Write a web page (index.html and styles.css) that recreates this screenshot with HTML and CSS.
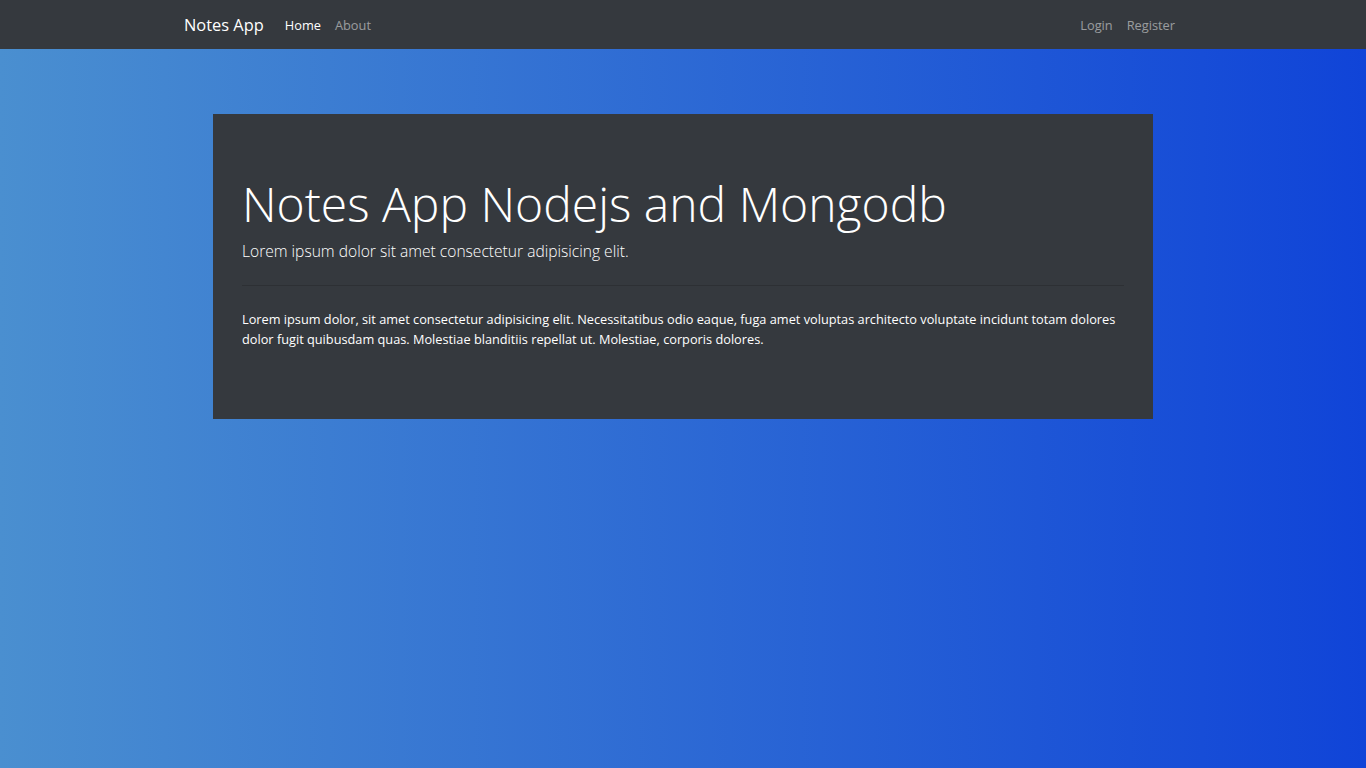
FILE: index.html
```html
<!DOCTYPE html>
<html lang="en">
<head>
<meta charset="utf-8">
<title>Notes App</title>
<link rel="stylesheet" href="styles.css">
</head>
<body>
<nav class="navbar">
  <div class="nav-container">
    <a class="brand" href="#">Notes App</a>
    <ul class="nav">
      <li><a class="nav-link active" href="#">Home</a></li>
      <li><a class="nav-link" href="#">About</a></li>
    </ul>
    <ul class="nav nav-right">
      <li><a class="nav-link" href="#">Login</a></li>
      <li><a class="nav-link" href="#">Register</a></li>
    </ul>
  </div>
</nav>
<main class="main">
  <section class="jumbotron">
    <h1 class="display">Notes App Nodejs and Mongodb</h1>
    <p class="lead">Lorem ipsum dolor sit amet consectetur adipisicing elit.</p>
    <hr class="divider">
    <p class="body-text">Lorem ipsum dolor, sit amet consectetur adipisicing elit. Necessitatibus odio eaque, fuga amet voluptas architecto voluptate incidunt totam dolores dolor fugit quibusdam quas. Molestiae blanditiis repellat ut. Molestiae, corporis dolores.</p>
  </section>
</main>
</body>
</html>
```
FILE: styles.css
```css
* { box-sizing: border-box; }
html, body { margin: 0; padding: 0; }
body {
  min-height: 100vh;
  font-family: "Open Sans", "Noto Sans", sans-serif;
  color: #fff;
  background: linear-gradient(to right, #4a8fd0 0%, #1044d8 100%);
}
.navbar {
  background: #35393e;
  height: 49px;
}
.nav-container {
  max-width: 1028px;
  margin: 0 auto;
  padding: 0 15px;
  height: 100%;
  display: flex;
  align-items: center;
}
.brand {
  color: #fff;
  text-decoration: none;
  font-size: 16.4px;
  margin-right: 14px;
}
.nav {
  list-style: none;
  margin: 0;
  padding: 0;
  display: flex;
}
.nav-right { margin-left: auto; }
.nav-link {
  display: block;
  padding: 8px 7px;
  font-size: 12.8px;
  color: rgba(255,255,255,.5);
  text-decoration: none;
}
.nav-link.active { color: #fff; }
.main { padding-top: 65px; }
.jumbotron {
  width: 940px;
  margin: 0 auto;
  background: #35393e;
  padding: 61px 29px 70px;
}
.display {
  margin: 0 0 6px;
  font-size: 48px;
  font-weight: 300;
  line-height: 1.2;
}
.lead {
  margin: 0;
  font-size: 15.6px;
  font-weight: 300;
  line-height: 24px;
}
.divider {
  margin: 22px 0 23px;
  border: 0;
  border-top: 1px solid rgba(0,0,0,.15);
}
.body-text {
  margin: 0;
  font-size: 12.75px;
  line-height: 20px;
}
```
